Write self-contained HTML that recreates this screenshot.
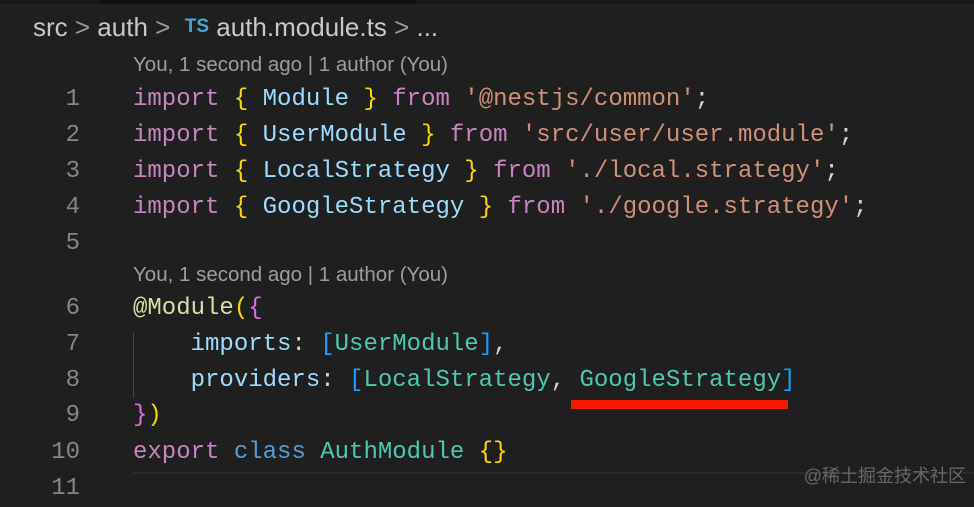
<!DOCTYPE html><html><head><style>
body{margin:0;width:974px;height:490px;background:#1f1f1f;overflow:hidden;position:relative;font-family:"Liberation Mono",monospace}
.top{position:absolute;left:0;top:0;width:974px;height:4px;background:#181818}
.top i{position:absolute;left:100px;top:0;width:316px;height:4px;background:#111}
.bc{position:absolute;left:33px;top:12px;font:26px "Liberation Sans",sans-serif;color:#c8c8c8;white-space:pre}
.bc .ts{color:#4aa5d6;font-weight:bold;font-size:19px;vertical-align:4px}
.bc .g{color:#999}
.lens{position:absolute;left:133px;font:20.5px "Liberation Sans",sans-serif;color:#9d9d9d}
.ln{position:absolute;width:80px;text-align:right;left:0;font-size:24px;color:#858585;line-height:36px}
.cd{position:absolute;left:133px;font-size:24px;line-height:36px;white-space:pre;color:#d4d4d4}
.k{color:#c586c0}.y{color:#ffd700}.v{color:#9cdcfe}.s{color:#ce9178}.c{color:#4ec9b0}.b{color:#569cd6}.f{color:#dcdcaa}.br{color:#179fff}.p{color:#da70d6}
.guide{position:absolute;left:133px;top:332px;width:1px;height:66px;background:#444}
.cur{position:absolute;left:133px;top:472px;width:841px;height:30px;border-top:2px solid #2a2a2a;background:#1f1f1f}
.red{position:absolute;left:571px;top:400px;width:217px;height:9px;background:#f21a00}
.wm{position:absolute;right:8px;top:462px;font:18px "Liberation Sans","Noto Sans CJK SC",sans-serif;color:#666}
</style></head><body>
<div class="top"><i></i></div>
<div class="bc">src <span class="g">&gt;</span> auth <span class="g">&gt;</span>  <span class="ts">TS</span> auth.module.ts <span class="g">&gt;</span> ...</div>
<div class="lens" style="top:53px">You, 1 second ago | 1 author (You)</div>
<div class="lens" style="top:263px">You, 1 second ago | 1 author (You)</div>
<div class="ln" style="top:82px">1</div><div class="ln" style="top:118px">2</div><div class="ln" style="top:154px">3</div><div class="ln" style="top:190px">4</div><div class="ln" style="top:226px">5</div>
<div class="ln" style="top:291px">6</div><div class="ln" style="top:327px">7</div><div class="ln" style="top:363px">8</div><div class="ln" style="top:398px">9</div><div class="ln" style="top:435px">10</div>
<div class="cur"></div>
<div class="ln" style="top:471px">11</div>
<div class="cd" style="top:82px"><span class="k">import</span> <span class="y">{</span> <span class="v">Module</span> <span class="y">}</span> <span class="k">from</span> <span class="s">'@nestjs/common'</span>;</div>
<div class="cd" style="top:118px"><span class="k">import</span> <span class="y">{</span> <span class="v">UserModule</span> <span class="y">}</span> <span class="k">from</span> <span class="s">'src/user/user.module'</span>;</div>
<div class="cd" style="top:154px"><span class="k">import</span> <span class="y">{</span> <span class="v">LocalStrategy</span> <span class="y">}</span> <span class="k">from</span> <span class="s">'./local.strategy'</span>;</div>
<div class="cd" style="top:190px"><span class="k">import</span> <span class="y">{</span> <span class="v">GoogleStrategy</span> <span class="y">}</span> <span class="k">from</span> <span class="s">'./google.strategy'</span>;</div>
<div class="cd" style="top:291px"><span class="f">@Module</span><span class="y">(</span><span class="p">{</span></div>
<div class="cd" style="top:327px">    <span class="v">imports</span>: <span class="br">[</span><span class="c">UserModule</span><span class="br">]</span>,</div>
<div class="cd" style="top:363px">    <span class="v">providers</span>: <span class="br">[</span><span class="c">LocalStrategy</span>, <span class="c">GoogleStrategy</span><span class="br">]</span></div>
<div class="cd" style="top:398px"><span class="p">}</span><span class="y">)</span></div>
<div class="cd" style="top:435px"><span class="k">export</span> <span class="b">class</span> <span class="c">AuthModule</span> <span class="y">{}</span></div>
<div class="guide"></div>
<div class="red"></div>
<div class="wm">@稀土掘金技术社区</div>
</body></html>
